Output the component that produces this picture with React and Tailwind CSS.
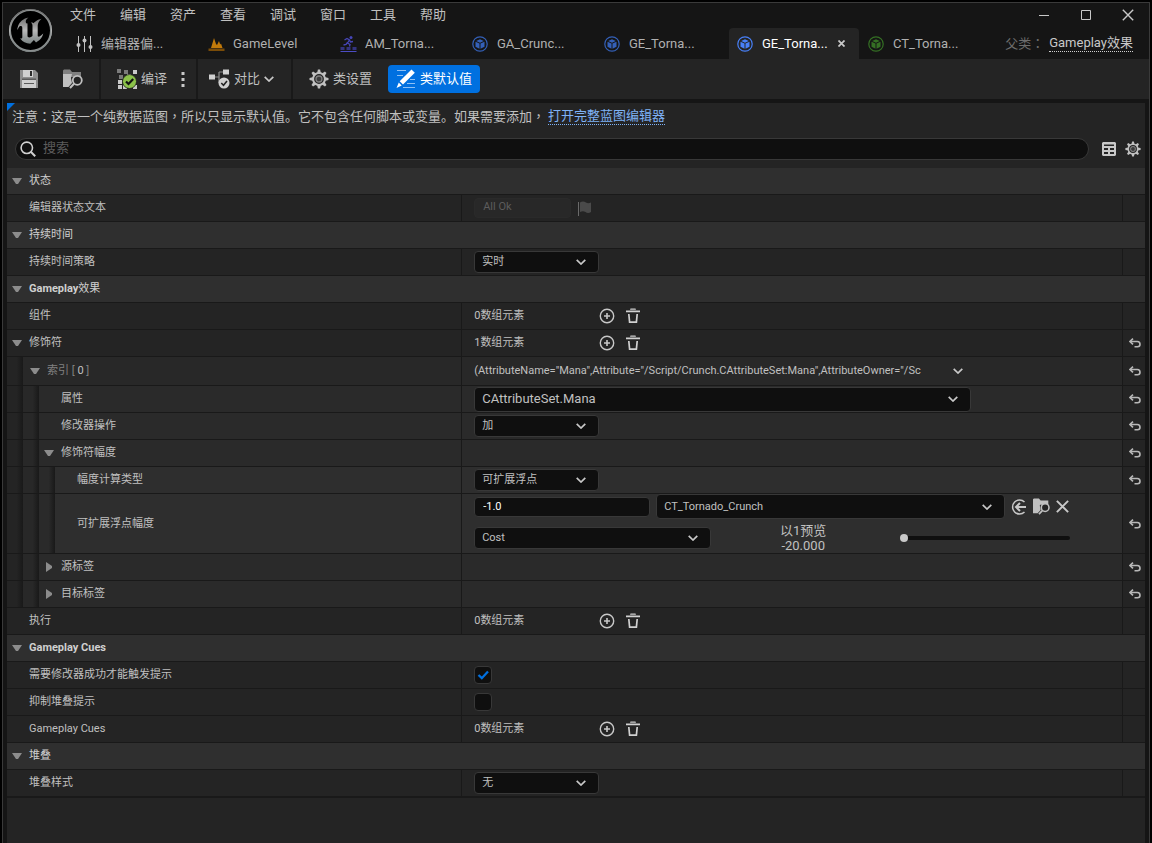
import { useState } from "react";
import clsx from "clsx";
import { SiUnrealengine } from "react-icons/si";

/* ---------- icons ---------- */

function ChevronDown({ className }) {
	return (
		<svg className={className} width="10" height="6" viewBox="0 0 10 6" fill="none" stroke="#c8c8c8" strokeWidth="1.7">
			<path d="M0.7 0.8 L5 5 L9.3 0.8" />
		</svg>
	);
}

function Triangle({ open }) {
	return (
		<svg width="10" height="10" viewBox="0 0 10 10" fill="#8c8c8c">
			{open ? <path d="M0 2 H10 L6 8 H4 Z" /> : <path d="M2 0 V10 L8 6 V4 Z" />}
		</svg>
	);
}

function SlidersIcon() {
	return (
		<svg width="17" height="16" viewBox="0 0 17 16" fill="#c0c0c0">
			<path d="M2 0h1v16H2zM8 0h1v16H8zM14 0h1v16h-1z" />
			<circle cx="2.5" cy="9" r="2" />
			<circle cx="8.5" cy="4.5" r="2" />
			<circle cx="14.5" cy="11" r="2" />
		</svg>
	);
}

function LevelIcon() {
	return (
		<svg width="17" height="16" viewBox="0 0 17 16">
			<path d="M3 12 L6 2 L8 8 L9 9 L11 5 L12.200 8.500 L13 7.500 L14.500 12 Z" fill="#c27a0a" />
			<path d="M0.500 12.500h16v2.500h-16z" fill="#7a4c08" />
		</svg>
	);
}

function MontageIcon() {
	return (
		<svg width="17" height="16" viewBox="0 0 17 16">
			<circle cx="11" cy="1.500" r="1.500" fill="#4646b8" />
			<path d="M4.500 4 L7 2.500 L9.500 4 L7.500 7 L10 8.500 L9.500 10.500 M9.500 4 L10.500 6 L13 5.500 M7.500 6.500 L6 8.500 L3.500 9" fill="none" stroke="#4646b8" strokeWidth="1.300" />
			<path d="M0.500 11h4v3h-4zM6.500 11h4v3h-4zM12.500 11h4v3h-4z" fill="#34347e" />
			<path d="M0.500 15h16v1h-16z" fill="#4c4cc4" />
		</svg>
	);
}

function BlueprintIcon({ color }) {
	return (
		<svg width="16" height="16" viewBox="0 0 16 16" fill="none">
			<circle cx="8" cy="8" r="7.200" stroke={color} strokeWidth="1.200" />
			<path d="M8 3.200 L11.800 4.900 L8 6.700 L4.200 4.900 Z" fill={color} />
			<path d="M3.500 5.700 L7.500 7.600 V12.800 L3.500 10.800 Z M12.500 5.700 L8.500 7.600 V12.800 L12.500 10.800 Z" fill={color} />
		</svg>
	);
}

function SaveIcon() {
	return (
		<svg width="18" height="18" viewBox="0 0 18 18">
			<path d="M0 0 H15 L18 3 V18 H0 Z" fill="#8e8e8e" />
			<path d="M3 0h10v7H3z" fill="#d0d0d0" />
			<path d="M10 1h2v5h-2z" fill="#2a2a2a" />
			<path d="M2 10h14v8H2z" fill="#d0d0d0" />
			<path d="M2 8.500h14v1.500H2zM4 13h10v1H4z" fill="#5a5a5a" />
		</svg>
	);
}

function BrowseIcon({ small }) {
	return (
		<svg width={small ? 17 : 20} height={small ? 17 : 20} viewBox="0 0 20 20">
			<path d="M0 1.500 L1 0.500 H7 L9 3 H18 V8 H0 Z" fill={small ? "#c0c0c0" : "#808080"} />
			<path d="M0 5 H9 L8 9 L9 14 L5.500 18 H0 Z" fill="#c0c0c0" />
			<circle cx="14.300" cy="11.300" r="4.500" fill="#242424" stroke="#c0c0c0" strokeWidth="1.800" />
			<path d="M11 14.800 L7 19" stroke="#c0c0c0" strokeWidth="2" />
		</svg>
	);
}

function CompileIcon() {
	return (
		<svg width="20" height="20" viewBox="0 0 20 20">
			<path d="M0 0h4v4H0zM7 1h4v4H7zM2 6h4v4H2z" fill="#7a7a7a" />
			<path d="M16 1h4v4h-4zM10 5h4v3h-4zM1 11h4v4H1zM1 16h4v4H1zM6 16h4v4H6zM16 16h4v4h-4z" fill="#c8c8c8" />
			<circle cx="12.500" cy="12.500" r="7" fill="#8bc24a" stroke="#1c1c1c" strokeWidth="0.800" />
			<path d="M9 12.500 L11.500 15 L16.200 10" fill="none" stroke="#111" strokeWidth="2.200" />
		</svg>
	);
}

function DotsIcon() {
	return (
		<svg width="4" height="16" viewBox="0 0 4 16" fill="#c8c8c8">
			<path d="M0.500 1h3v3h-3zM0.500 7h3v3h-3zM0.500 13h3v3h-3z" />
		</svg>
	);
}

function DiffIcon() {
	return (
		<svg width="21" height="20" viewBox="0 0 21 20">
			<path d="M5 8 H10 M10 3 V14 M10 3 H15 M10 14 H12" fill="none" stroke="#8c8c8c" strokeWidth="1.200" />
			<path d="M0 5.500h6v5H0zM14 0.500h6v5h-6z" fill="#d0d0d0" />
			<circle cx="15" cy="14" r="5.500" fill="#d0d0d0" />
			<path d="M12.300 14 L14.500 16.200 L18 12" fill="none" stroke="#242424" strokeWidth="1.600" />
		</svg>
	);
}

function GearIcon({ size }) {
	const teeth = [0, 45, 90, 135, 180, 225, 270, 315];
	return (
		<svg width={size} height={size} viewBox="0 0 20 20">
			{teeth.map((a) => (
				<path key={a} d="M8 4.500 L8.900 0.500 H11.100 L12 4.500 Z" fill="#c0c0c0" transform={`rotate(${a} 10 10)`} />
			))}
			<circle cx="10" cy="10" r="5.900" fill="none" stroke="#c0c0c0" strokeWidth="2" />
			<circle cx="10" cy="10" r="3" fill="#3c3c3c" stroke="#808080" strokeWidth="1.300" />
		</svg>
	);
}

function PencilIcon() {
	return (
		<svg width="20" height="20" viewBox="0 0 20 20">
			<path d="M1 1.500h9M1 6.500h6M14 10.500h5M11 14.500h8M7 18.500h12" stroke="#8ec0f5" strokeWidth="1" />
			<path d="M15.500 0.500 L18.800 3.800 L7 15.500 L3.700 12.200 Z" fill="#fff" />
			<path d="M2.800 13.500 L5.700 16.400 L0.500 19 Z" fill="#fff" />
		</svg>
	);
}

function SearchIcon() {
	return (
		<svg width="16" height="16" viewBox="0 0 16 16" fill="none" stroke="#d0d0d0" strokeWidth="1.600">
			<circle cx="6.800" cy="6.800" r="5.700" />
			<path d="M10.800 10.800 L15.200 15.200" strokeWidth="2" />
		</svg>
	);
}

function GridIcon() {
	return (
		<svg width="14" height="14" viewBox="0 0 14 14">
			<path d="M1 0 H13 L14 1 V13 L13 14 H1 L0 13 V1 Z" fill="#c8c8c8" />
			<path d="M2 2.500h10v1.500H2zM2 6h4v2H2zM8 6h4v2H8zM2 10h4v2H2zM8 10h4v2H8z" fill="#242424" />
		</svg>
	);
}

function FlagIcon() {
	return (
		<svg width="14" height="15" viewBox="0 0 14 15">
			<path d="M0 1h1v14H0z" fill="#6a6a6a" />
			<path d="M2 1.500 Q5 -0.500 8 1.500 Q10 3 13 1.500 V11 Q10 13 7.500 11 Q5 9.500 2 11 Z" fill="#4a4a4a" />
		</svg>
	);
}

function AddIcon() {
	return (
		<svg width="16" height="16" viewBox="0 0 16 16" fill="none" stroke="#c8c8c8">
			<circle cx="8" cy="8" r="6.700" strokeWidth="1.400" />
			<path d="M8 5v6M5 8h6" strokeWidth="1.600" />
		</svg>
	);
}

function TrashIcon() {
	return (
		<svg width="14" height="16" viewBox="0 0 14 16">
			<path d="M4.500 0.500h5l0.500 1.200h-6zM0 2.500h14v1.800H0z" fill="#d0d0d0" />
			<path d="M2.800 6 L3.600 14.200 H10.400 L11.200 6" fill="none" stroke="#d0d0d0" strokeWidth="1.700" />
		</svg>
	);
}

function UndoIcon() {
	return (
		<svg width="12" height="10" viewBox="0 0 12 10" fill="none" stroke="#b8b8b8" strokeWidth="1.600">
			<path d="M4 0.600 L1 3.500 L4 6.400" />
			<path d="M1 3.500 H8.300 Q11 3.700 11 6.200 Q11 8.600 8.500 8.800 H5.500" />
		</svg>
	);
}

function UseIcon() {
	return (
		<svg width="16" height="16" viewBox="0 0 16 16" fill="none" stroke="#c8c8c8">
			<path d="M13.500 3 A7 7 0 1 0 13.500 13" strokeWidth="1.500" />
			<path d="M15 8 H5 M9 4 L5 8 L9 12" strokeWidth="2" />
		</svg>
	);
}

function CrossIcon({ size, width }) {
	return (
		<svg width={size} height={size} viewBox="0 0 12 12" fill="none" stroke="#c8c8c8" strokeWidth={width}>
			<path d="M0.800 0.800 L11.200 11.200 M11.200 0.800 L0.800 11.200" />
		</svg>
	);
}

/* ---------- controls ---------- */

// centred full-width punctuation
function Mark({ children }) {
	return <span className="font-['Noto_Sans_CJK_TC',sans-serif]">{children}</span>;
}

function Dropdown({ id, value, label, className }) {
	return (
		<div className={clsx("relative", className)}>
			<select
				id={id}
				aria-label={label}
				className="size-full appearance-none rounded border border-[#383838] bg-[#0f0f0f] pr-8 pl-[7px] text-[#c0c0c0] outline-none"
			>
				<option>{value}</option>
			</select>
			<ChevronDown className="pointer-events-none absolute top-1/2 right-[13px] -translate-y-1/2" />
		</div>
	);
}

function ArrayValue({ count }) {
	return (
		<div className="flex items-center">
			<span className="w-[125px]">{count}数组元素</span>
			<button aria-label="添加元素" className="mr-[11px]"><AddIcon /></button>
			<button aria-label="移除所有元素"><TrashIcon /></button>
		</div>
	);
}

function Check({ id, defaultChecked }) {
	const [checked, setChecked] = useState(defaultChecked);
	return (
		<div className="relative size-[18px]">
			<input
				id={id}
				type="checkbox"
				checked={checked}
				onChange={(e) => setChecked(e.target.checked)}
				className="block size-full appearance-none rounded border border-[#383838] bg-[#0f0f0f]"
			/>
			{checked && (
				<svg className="pointer-events-none absolute inset-0" width="18" height="18" viewBox="0 0 18 18" fill="none">
					<path d="M4.500 9 L7.800 12.200 L14 5.500" stroke="#0070e0" strokeWidth="2.300" />
				</svg>
			)}
		</div>
	);
}

function ScalableFloat() {
	return (
		<div className="flex h-[59px] flex-col gap-1">
			<div className="flex h-[25px] items-center gap-[6px]">
				<input
					id="magnitude"
					defaultValue="-1.0"
					className="h-5 w-[176px] rounded border border-[#383838] bg-[#0f0f0f] px-2 text-white outline-none"
				/>
				<Dropdown label="曲线表" value="CT_Tornado_Crunch" className="h-[25px] w-[349px]" />
				<button aria-label="使用选中资产"><UseIcon /></button>
				<button aria-label="浏览"><BrowseIcon small /></button>
				<button aria-label="清除"><CrossIcon size={13} width={1.8} /></button>
			</div>
			<div className="flex h-[30px] items-center">
				<Dropdown label="曲线行" value="Cost" className="h-[22px] w-[237px]" />
				<div className="ml-[60px] w-16 text-center text-[13px] leading-[15px]">
					<div>以1预览</div>
					<div>-20.000</div>
				</div>
				<input
					type="range"
					aria-label="预览等级"
					min="0"
					max="30"
					defaultValue="0"
					className="ml-[65px] h-2 w-[170px] appearance-none bg-transparent [&::-webkit-slider-runnable-track]:h-1 [&::-webkit-slider-runnable-track]:rounded-full [&::-webkit-slider-runnable-track]:bg-[#0f0f0f] [&::-webkit-slider-thumb]:-mt-[2px] [&::-webkit-slider-thumb]:size-2 [&::-webkit-slider-thumb]:appearance-none [&::-webkit-slider-thumb]:rounded-full [&::-webkit-slider-thumb]:bg-[#c8c8c8]"
				/>
			</div>
		</div>
	);
}

/* ---------- data ---------- */

const MENU = ["文件", "编辑", "资产", "查看", "调试", "窗口", "工具", "帮助"];

const TABS = [
	{ label: "编辑器偏...", icon: <SlidersIcon /> },
	{ label: "GameLevel", icon: <LevelIcon /> },
	{ label: "AM_Torna...", icon: <MontageIcon /> },
	{ label: "GA_Crunc...", icon: <BlueprintIcon color="#3460b8" /> },
	{ label: "GE_Torna...", icon: <BlueprintIcon color="#3460b8" /> },
	{ label: "GE_Torna...", icon: <BlueprintIcon color="#4880f8" />, active: true },
	{ label: "CT_Torna...", icon: <BlueprintIcon color="#357024" /> },
];

const SECTIONS = [
	{
		id: "state",
		title: "状态",
		rows: [
			{
				label: "编辑器状态文本",
				htmlFor: "status",
				value: (
					<div className="flex items-center gap-[7px]">
						<input
							id="status"
							disabled
							defaultValue="All Ok"
							className="h-5 w-[97px] rounded border border-[#2a2a2a] bg-[#282828] px-2 pb-[3px] text-[#5c5c5c]"
						/>
						<FlagIcon />
					</div>
				),
			},
		],
	},
	{
		id: "duration",
		title: "持续时间",
		rows: [
			{ label: "持续时间策略", htmlFor: "policy", value: <Dropdown id="policy" value="实时" className="h-[22px] w-[125px]" /> },
		],
	},
	{
		id: "effect",
		latin: "Gameplay",
		title: "效果",
		rows: [
			{ label: "组件", value: <ArrayValue count={0} /> },
			{ label: "修饰符", open: true, reset: true, value: <ArrayValue count={1} /> },
			{
				label: <>索引 [ <span className="text-[#c0c0c0]">0</span> ]</>,
				level: 1,
				open: true,
				reset: true,
				value: (
					<div className="flex items-center">
						<span className="w-[459px] whitespace-nowrap">
							(AttributeName="Mana",Attribute="/Script/Crunch.CAttributeSet:Mana",AttributeOwner="/Sc
						</span>
						<button aria-label="索引选项" className="ml-5"><ChevronDown /></button>
					</div>
				),
			},
			{
				label: "属性",
				htmlFor: "attribute",
				level: 2,
				reset: true,
				value: <Dropdown id="attribute" value="CAttributeSet.Mana" className="h-[25px] w-[497px] text-[13px]" />,
			},
			{ label: "修改器操作", htmlFor: "op", level: 2, reset: true, value: <Dropdown id="op" value="加" className="h-[22px] w-[125px]" /> },
			{ label: "修饰符幅度", level: 2, open: true, reset: true },
			{ label: "幅度计算类型", htmlFor: "calc", level: 3, reset: true, value: <Dropdown id="calc" value="可扩展浮点" className="h-[22px] w-[125px]" /> },
			{ label: "可扩展浮点幅度", htmlFor: "magnitude", level: 3, reset: true, value: <ScalableFloat /> },
			{ label: "源标签", level: 2, open: false, reset: true },
			{ label: "目标标签", level: 2, open: false, reset: true },
			{ label: "执行", value: <ArrayValue count={0} /> },
		],
	},
	{
		id: "cues",
		latin: "Gameplay Cues",
		rows: [
			{ label: "需要修改器成功才能触发提示", htmlFor: "require", value: <Check id="require" defaultChecked /> },
			{ label: "抑制堆叠提示", htmlFor: "suppress", value: <Check id="suppress" defaultChecked={false} /> },
			{ label: "Gameplay Cues", value: <ArrayValue count={0} /> },
		],
	},
	{
		id: "stacking",
		title: "堆叠",
		rows: [
			{ label: "堆叠样式", htmlFor: "stack", value: <Dropdown id="stack" value="无" className="h-[22px] w-[125px]" /> },
		],
	},
];

const LEVEL_BG = ["bg-[#242424]", "bg-[#282828]", "bg-[#2a2a2a]", "bg-[#2e2e2e]"];

/* ---------- layout ---------- */

function PropertyRow({ label, htmlFor, level = 0, open, reset, value }) {
	const Label = htmlFor ? "label" : "span";
	return (
		<div className={clsx("flex border-b border-[#191919]", level === 1 ? "min-h-[29px]" : "min-h-[27px]", LEVEL_BG[level])}>
			<div className="flex w-2/5 border-r border-[#191919]">
				{LEVEL_BG.slice(0, level).map((bg) => (
					<div key={bg} className={clsx("w-4 bg-linear-to-r from-transparent from-60% to-[#191919]", bg)} />
				))}
				<div className={clsx("flex items-center", level === 1 ? "pl-[7px] text-[#808080]" : "pl-[5px]")}>
					<span className="w-[17px]">
						{open !== undefined && (
							<button aria-label="展开" className="block"><Triangle open={open} /></button>
						)}
					</span>
					<Label htmlFor={htmlFor}>{label}</Label>
				</div>
			</div>
			<div className="flex flex-1 items-center pl-3">{value}</div>
			<div className="flex w-[23px] items-center justify-end border-l border-[#191919] bg-[#242424] pr-1">
				{reset && <button aria-label="重置为默认值"><UndoIcon /></button>}
			</div>
		</div>
	);
}

function Section({ section }) {
	const [open, setOpen] = useState(true);
	return (
		<section>
			<button
				onClick={() => setOpen(!open)}
				className="flex h-[27px] w-full items-center border-b border-[#191919] bg-[#2f2f2f] pl-[5px] text-left text-[#d0d0d0]"
			>
				<span className="w-[17px]"><Triangle open={open} /></span>
				<span className="font-bold">{section.latin}</span>
				{section.title}
			</button>
			{open && section.rows.map((row, i) => <PropertyRow key={i} {...row} />)}
		</section>
	);
}

function TitleBar() {
	return (
		<header className="flex h-14 pl-[6px]">
			<div className="mt-[6px] size-[43px] rounded-full border-2 border-[#8c9090] bg-black">
				<svg width="0" height="0" className="absolute">
					<linearGradient id="steel" x1="0" y1="0" x2="0" y2="1">
						<stop offset="0.2" stopColor="#6e6e6e" />
						<stop offset="0.5" stopColor="#b8b8b8" />
						<stop offset="0.8" stopColor="#7c8484" />
					</linearGradient>
				</svg>
				<SiUnrealengine size={43} className="-m-[2px] fill-[url(#steel)]" />
			</div>
			<div className="flex flex-1 flex-col pl-[6px]">
				<div className="flex h-6 items-center justify-between">
					<nav className="flex">
						{MENU.map((m) => (
							<button key={m} className="w-[50px] text-center">{m}</button>
						))}
					</nav>
					<div className="flex">
						<button aria-label="最小化" className="flex w-[42px] items-center justify-center">
							<svg width="10" height="10" viewBox="0 0 10 10"><path d="M0 5h10v1H0z" fill="#c8c8c8" /></svg>
						</button>
						<button aria-label="最大化" className="flex w-[42px] items-center justify-center">
							<svg width="10" height="10" viewBox="0 0 10 10"><path d="M0.500 0.500h9v9h-9z" fill="none" stroke="#c8c8c8" /></svg>
						</button>
						<button aria-label="关闭" className="flex w-[42px] items-center justify-center"><CrossIcon size={12} width={1.4} /></button>
					</div>
				</div>
				<div className="mt-px flex flex-1 items-stretch justify-between pl-[11px]">
					<div className="flex">
						{TABS.map((tab, i) => (
							<button
								key={i}
								className={clsx(
									"mr-[2px] flex w-[130px] items-center rounded-t",
									tab.active ? "bg-[#242424] pl-2 text-white" : "pl-[7px] text-[#b0b0b0]"
								)}
							>
								<span className="w-[25px]">{tab.icon}</span>
								<span className="flex-1 text-left">{tab.label}</span>
								{tab.active && <span className="mr-[14px]"><CrossIcon size={7} width={3} /></span>}
							</button>
						))}
					</div>
					<div className="flex items-center pr-4">
						<span className="mr-[5px] text-[#6d6d6d]">父类<Mark>：</Mark></span>
						<a href="#parent" className="border-b border-dotted border-[#d0d0d0] leading-4 text-[#c8c8c8]">Gameplay效果</a>
					</div>
				</div>
			</div>
		</header>
	);
}

function Toolbar() {
	return (
		<div className="flex h-10 bg-[#242424]">
			<div className="flex w-[96px] items-center gap-[25px] pl-[17px]">
				<button aria-label="保存"><SaveIcon /></button>
				<button aria-label="浏览"><BrowseIcon /></button>
			</div>
			<div className="flex w-[97px] items-center border-l-2 border-[#191919] pl-[16px]">
				<button className="flex items-center gap-1"><CompileIcon />编译</button>
				<button aria-label="编译选项" className="ml-[14px]"><DotsIcon /></button>
			</div>
			<div className="flex w-[95px] items-center border-l-2 border-[#191919] pl-[11px]">
				<button className="flex items-center gap-1"><DiffIcon />对比<ChevronDown /></button>
			</div>
			<div className="flex items-center gap-[16px] border-l-2 border-[#191919] pl-[16px]">
				<button className="flex items-center gap-1"><GearIcon size={20} />类设置</button>
				<button className="flex h-7 items-center gap-1 rounded bg-[#0070e0] px-2 text-white"><PencilIcon />类默认值</button>
			</div>
		</div>
	);
}

export default function App() {
	return (
		<div className="flex min-h-screen flex-col bg-black px-[2px] pt-[2px] font-['Roboto','Noto_Sans_CJK_SC',sans-serif] text-[13px] leading-4 text-[#c0c0c0]">
			<div className="flex flex-1 flex-col border-x border-t border-[#3a3a3a] bg-[#151515]">
				<TitleBar />
				<Toolbar />
				<main className="relative mx-1 mt-1 flex-1 bg-[#242424]">
					<svg className="absolute top-0 left-0" width="8" height="8" viewBox="0 0 8 8"><path d="M0 0h8L0 8z" fill="#0070e0" /></svg>
					<p className="flex h-[26px] items-center gap-[3px] pl-[5px]">
						<span>
							注意<Mark>：</Mark>这是一个纯数据蓝图<Mark>，</Mark>所以只显示默认值。它不包含任何脚本或变量。如果需要添加<Mark>，</Mark>
						</span>
						<a href="#full" className="border-b border-dotted border-[#7fb2f5] text-[#7fb2f5]">打开完整蓝图编辑器</a>
					</p>
					<div className="mt-[9px] mb-2 flex items-center pr-1 pl-2">
						<label className="flex h-[22px] flex-1 items-center gap-[7px] rounded-full border border-[#383838] bg-[#0f0f0f] pl-1">
							<SearchIcon />
							<input type="search" aria-label="搜索" placeholder="搜索" className="flex-1 bg-transparent pb-[2px] outline-none placeholder:text-[#5c5c5c]" />
						</label>
						<button aria-label="表格视图" className="ml-[13px]"><GridIcon /></button>
						<button aria-label="设置" className="ml-[9px]"><GearIcon size={16} /></button>
					</div>
					<div className="border-b border-[#191919] text-[11px]">
						{SECTIONS.map((s) => <Section key={s.id} section={s} />)}
					</div>
				</main>
			</div>
		</div>
	);
}
